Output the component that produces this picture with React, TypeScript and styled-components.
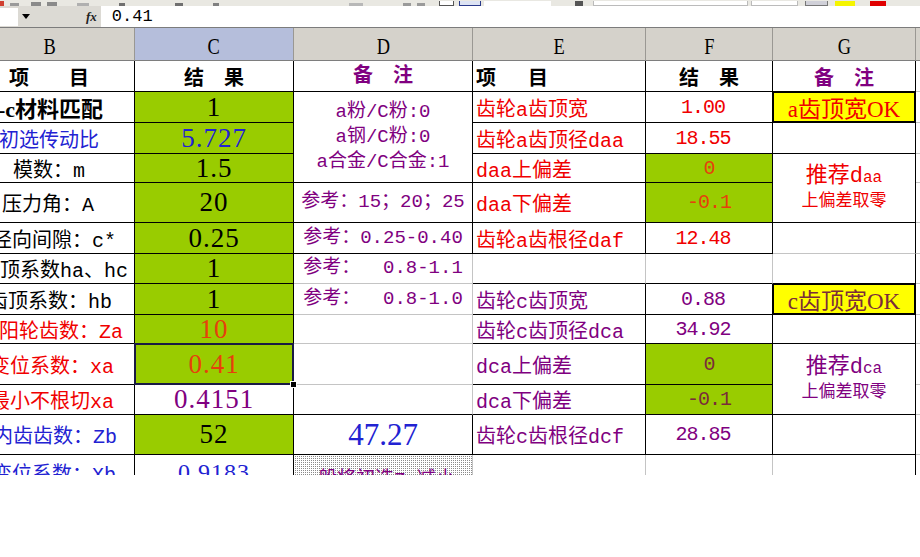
import React from "react";
import styled, { createGlobalStyle } from "styled-components";

const K = "#000";
const GRID = "#c4c4c4";
const GREEN = "#99cc00";
const YELLOW = "#ffff00";
const PURPLE = "#800080";
const RED = "#f00000";
const BLUE = "#2222d2";
const ORANGE = "#e6400c";
const BROWN = "#7a2c3a";
const MONO = `"Liberation Mono", "Noto Sans CJK SC", monospace`;
const SERIF = `"Liberation Serif", "Noto Sans CJK SC", serif`;

const Global = createGlobalStyle`
  html, body { margin: 0; padding: 0; background: #fff; }
  body { width: 920px; height: 557px; overflow: hidden; font-family: ${MONO}; }
`;

const Toolbar = styled.div`
  height: 6px;
  background: #e9e8e2;
  display: flex;
  align-items: flex-end;
  overflow: hidden;
`;

const ToolBit = styled.span<{ $w: number; $c: string; $ml: number; $h?: number; $edge?: string }>`
  flex: none;
  box-sizing: border-box;
  width: ${p => p.$w}px;
  height: ${p => p.$h ?? 5}px;
  margin-left: ${p => p.$ml}px;
  background: ${p => p.$c};
  border: ${p => (p.$edge ? `1px solid ${p.$edge}` : "none")};
  border-top: none;
`;

const FormulaBar = styled.div`
  height: 21px;
  display: flex;
  align-items: center;
  background: #dcdad4;
  border-bottom: 1px solid #7c7c7c;
`;

const NameBox = styled.div`
  width: 18px;
  height: 18px;
  background: #fff;
`;

const DropArrow = styled.span`
  width: 0;
  height: 0;
  margin-left: 4px;
  border-left: 4px solid transparent;
  border-right: 4px solid transparent;
  border-top: 5px solid #000;
`;

const Fx = styled.span`
  margin-left: 56px;
  font: italic bold 13px "Liberation Serif", serif;
  color: #222;
`;

const FormulaInput = styled.div`
  flex: 1;
  align-self: stretch;
  margin-left: 4px;
  padding-left: 11px;
  background: #fff;
  display: flex;
  align-items: center;
  font: 17px ${MONO};
  color: #000;
`;

const Viewport = styled.div`
  width: 920px;
  height: 447px;
  overflow: hidden;
`;

const Sheet = styled.div`
  display: grid;
  margin-left: -34px;
  grid-template-columns: 169px 159px 179px 173px 127px 143px 60px;
  grid-template-rows: 33px 31px 31px 31px 29px 40px 31px 30px 31px 29px 41px 30px 40px 36px;
`;

const HeadCell = styled.div<{ $active?: boolean }>`
  box-sizing: border-box;
  display: flex;
  align-items: center;
  justify-content: center;
  padding-top: 5px;
  background: ${p => (p.$active ? "#b5bedb" : "#d5d2cb")};
  border-right: 1px solid #9a9893;
  border-bottom: 1px solid #7e7e7e;
  font: 23px "Liberation Serif", serif;
  color: #000;
`;

const HeadLetter = styled.span`
  display: inline-block;
  transform: scaleX(0.8);
`;

const Cell = styled.div<{ $r?: string; $b?: string; $bg?: string; $span?: number }>`
  box-sizing: border-box;
  min-width: 0;
  display: flex;
  align-items: center;
  position: relative;
  overflow: hidden;
  white-space: pre;
  background: ${p => p.$bg ?? "#fff"};
  border-right: 1px solid ${p => p.$r ?? K};
  border-bottom: 1px solid ${p => p.$b ?? K};
  ${p => (p.$span ? `grid-row: span ${p.$span};` : "")}
`;

const LabelCell = styled(Cell)<{ $indent: number; $tone?: string; $bold?: boolean; $size?: number; $serif?: boolean }>`
  padding-left: ${p => p.$indent + 34}px;
  font-family: ${p => (p.$serif ? SERIF : MONO)};
  font-size: ${p => p.$size ?? 20}px;
  font-weight: ${p => (p.$bold ? 700 : 400)};
  color: ${p => p.$tone ?? K};
`;

const ValueCell = styled(Cell)<{ $tone?: string; $size?: number; $selected?: boolean }>`
  justify-content: center;
  font-family: ${SERIF};
  font-size: ${p => p.$size ?? 27}px;
  letter-spacing: 1px;
  color: ${p => p.$tone ?? K};
  ${p => (p.$selected ? "overflow: visible; z-index: 2;" : "")}
`;

const NoteCell = styled(Cell)<{ $tone?: string; $size?: number }>`
  flex-direction: column;
  justify-content: center;
  font-family: ${p => (p.$size && p.$size > 24 ? SERIF : MONO)};
  font-size: ${p => p.$size ?? 19}px;
  line-height: 25px;
  color: ${p => p.$tone ?? PURPLE};
`;

const DottedNote = styled(Cell)`
  align-items: flex-start;
  padding: 8px 0 0 5px;
  background-color: #fff;
  background-image: linear-gradient(90deg, #fff 1px, transparent 1px),
    linear-gradient(#fff 1px, #8a8a8a 1px);
  background-size: 2px 2px;
  font-family: ${MONO};
  font-size: 19px;
  color: ${PURPLE};
`;

const ItemCell = styled(Cell)<{ $tone?: string }>`
  padding-left: 3px;
  font-family: ${MONO};
  font-size: 20px;
  color: ${p => p.$tone ?? K};
`;

const ResultCell = styled(Cell)<{ $tone?: string; $shift?: number }>`
  justify-content: center;
  padding-right: ${p => p.$shift ?? 0}px;
  font-family: ${MONO};
  font-size: 20px;
  letter-spacing: -1px;
  color: ${p => p.$tone ?? K};
`;

const RemarkCell = styled(Cell)<{ $tone?: string }>`
  flex-direction: column;
  justify-content: center;
  font-family: ${MONO};
  color: ${p => p.$tone ?? K};
`;

const CheckCell = styled(Cell)<{ $tone: string }>`
  justify-content: center;
  background: ${YELLOW};
  box-shadow: inset 1px 1px 0 #000, inset -1px -1px 0 #000;
  font-family: ${SERIF};
  font-size: 23px;
  color: ${p => p.$tone};
`;

const Caption = styled.span<{ $tone?: string }>`
  font-family: ${MONO};
  font-size: 20px;
  font-weight: 700;
  letter-spacing: 0;
  color: ${p => p.$tone ?? K};
`;

const Advice = styled.span`
  font-size: 22px;
  line-height: 25px;
`;

const AdviceSub = styled.span`
  font-size: 16px;
`;

const AdviceNote = styled.span`
  font-size: 17px;
  line-height: 22px;
`;

const Selection = styled.span`
  position: absolute;
  left: -1px;
  top: -1px;
  right: -1px;
  bottom: -1px;
  border: 2px solid #1a1a44;
  pointer-events: none;
`;

const FillHandle = styled.span`
  position: absolute;
  right: -4px;
  bottom: -4px;
  width: 5px;
  height: 5px;
  background: #000;
  border: 1px solid #fff;
`;

export default function App() {
  return (
    <>
      <Global />
      <Toolbar>
        <ToolBit $w={4} $c="#d04030" $ml={0} />
        <ToolBit $w={9} $c="#9a9a9a" $ml={6} $h={3} />
        <ToolBit $w={10} $c="#8a8a8a" $ml={12} $h={4} />
        <ToolBit $w={10} $c="#8a8a8a" $ml={6} $h={4} />
        <ToolBit $w={12} $c="#b0b0b0" $ml={20} $h={3} />
        <ToolBit $w={6} $c="#707070" $ml={30} $h={3} />
        <ToolBit $w={8} $c="#707070" $ml={50} $h={3} />
        <ToolBit $w={6} $c="#808080" $ml={30} $h={3} />
        <ToolBit $w={14} $c="#b8b8b8" $ml={130} $h={3} />
        <ToolBit $w={8} $c="#9a9a9a" $ml={40} $h={3} />
        <ToolBit $w={8} $c="#9a9a9a" $ml={6} $h={3} />
        <ToolBit $w={15} $c="#fff" $ml={14} $edge="#555" />
        <ToolBit $w={22} $c="#dde3f3" $ml={5} $edge="#2a3a8a" />
        <ToolBit $w={67} $c="#fff" $ml={3} />
        <ToolBit $w={8} $c="#555" $ml={24} $h={5} />
        <ToolBit $w={155} $c="#fff" $ml={10} $edge="#bbb" />
        <ToolBit $w={47} $c="#fff" $ml={3} $edge="#bbb" />
        <ToolBit $w={23} $c="#d0d0d8" $ml={7} $edge="#777" />
        <ToolBit $w={20} $c="#f5f500" $ml={7} />
        <ToolBit $w={16} $c="#e00000" $ml={15} />
      </Toolbar>
      <FormulaBar>
        <NameBox />
        <DropArrow />
        <Fx>fx</Fx>
        <FormulaInput>0.41</FormulaInput>
      </FormulaBar>
      <Viewport>
        <Sheet>
          <HeadCell><HeadLetter>B</HeadLetter></HeadCell>
          <HeadCell $active><HeadLetter>C</HeadLetter></HeadCell>
          <HeadCell><HeadLetter>D</HeadLetter></HeadCell>
          <HeadCell><HeadLetter>E</HeadLetter></HeadCell>
          <HeadCell><HeadLetter>F</HeadLetter></HeadCell>
          <HeadCell><HeadLetter>G</HeadLetter></HeadCell>
          <HeadCell />

          {/* row 1 */}
          <LabelCell $indent={9} $bold>项　　目</LabelCell>
          <ValueCell><Caption>结　果</Caption></ValueCell>
          <NoteCell><Caption $tone={PURPLE}>备　注</Caption></NoteCell>
          <ItemCell><Caption>项　 目</Caption></ItemCell>
          <ResultCell><Caption>结　果</Caption></ResultCell>
          <RemarkCell><Caption $tone={PURPLE}>备　注</Caption></RemarkCell>
          <Cell $r={GRID} $b={GRID} />

          {/* row 2 */}
          <LabelCell $indent={-13} $bold $size={22} $serif>a-c材料匹配</LabelCell>
          <ValueCell $bg={GREEN}>1</ValueCell>
          <NoteCell $span={3}>
            <span>a粉/C粉:0</span>
            <span>a钢/C粉:0</span>
            <span>a合金/C合金:1</span>
          </NoteCell>
          <ItemCell $tone={RED}>齿轮a齿顶宽</ItemCell>
          <ResultCell $tone={RED} $shift={12}>1.00</ResultCell>
          <CheckCell $tone={RED}>a齿顶宽OK</CheckCell>
          <Cell $r={GRID} $b={GRID} />

          {/* row 3 */}
          <LabelCell $indent={-1} $tone={BLUE}>初选传动比</LabelCell>
          <ValueCell $bg={GREEN} $tone={BLUE}>5.727</ValueCell>
          <ItemCell $tone={RED}>齿轮a齿顶径daa</ItemCell>
          <ResultCell $tone={RED} $shift={12}>18.55</ResultCell>
          <RemarkCell />
          <Cell $r={GRID} $b={GRID} />

          {/* row 4 */}
          <LabelCell $indent={13}>模数：m</LabelCell>
          <ValueCell $bg={GREEN}>1.5</ValueCell>
          <ItemCell $tone={RED}>daa上偏差</ItemCell>
          <ResultCell $bg={GREEN} $tone={ORANGE}>0</ResultCell>
          <RemarkCell $span={2} $tone={RED}>
            <Advice>推荐d<AdviceSub>aa</AdviceSub></Advice>
            <AdviceNote>上偏差取零</AdviceNote>
          </RemarkCell>
          <Cell $r={GRID} $b={GRID} />

          {/* row 5 */}
          <LabelCell $indent={2}>压力角：A</LabelCell>
          <ValueCell $bg={GREEN}>20</ValueCell>
          <NoteCell>参考：15；20；25</NoteCell>
          <ItemCell $tone={RED}>daa下偏差</ItemCell>
          <ResultCell $bg={GREEN} $tone={ORANGE}>-0.1</ResultCell>
          <Cell $r={GRID} $b={GRID} />

          {/* row 6 */}
          <LabelCell $indent={-8}>径向间隙：c*</LabelCell>
          <ValueCell $bg={GREEN}>0.25</ValueCell>
          <NoteCell>参考：0.25-0.40</NoteCell>
          <ItemCell $tone={RED}>齿轮a齿根径daf</ItemCell>
          <ResultCell $tone={RED} $shift={12}>12.48</ResultCell>
          <RemarkCell $b={GRID} />
          <Cell $r={GRID} $b={GRID} />

          {/* row 7 */}
          <LabelCell $indent={-20}>齿顶系数ha、hc</LabelCell>
          <ValueCell $bg={GREEN}>1</ValueCell>
          <NoteCell $r={GRID} $b={GRID}>参考：  0.8-1.1</NoteCell>
          <ItemCell $r={GRID} />
          <ResultCell $r={GRID} />
          <RemarkCell />
          <Cell $r={GRID} $b={GRID} />

          {/* row 8 */}
          <LabelCell $indent={-32}>内齿顶系数：hb</LabelCell>
          <ValueCell $bg={GREEN}>1</ValueCell>
          <NoteCell $r={GRID} $b={GRID}>参考：  0.8-1.0</NoteCell>
          <ItemCell $tone={PURPLE}>齿轮c齿顶宽</ItemCell>
          <ResultCell $tone={PURPLE} $shift={12}>0.88</ResultCell>
          <CheckCell $tone={BROWN}>c齿顶宽OK</CheckCell>
          <Cell $r={GRID} $b={GRID} />

          {/* row 9 */}
          <LabelCell $indent={-21} $tone={RED}>太阳轮齿数：Za</LabelCell>
          <ValueCell $bg={GREEN} $tone={ORANGE}>10</ValueCell>
          <NoteCell $r={GRID} $b={GRID} />
          <ItemCell $tone={PURPLE}>齿轮c齿顶径dca</ItemCell>
          <ResultCell $tone={PURPLE} $shift={12}>34.92</ResultCell>
          <RemarkCell />
          <Cell $r={GRID} $b={GRID} />

          {/* row 10 */}
          <LabelCell $indent={-10} $tone={RED}>变位系数：xa</LabelCell>
          <ValueCell $bg={GREEN} $tone={ORANGE} $selected>
            0.41
            <Selection />
            <FillHandle />
          </ValueCell>
          <NoteCell $r={GRID} $b={GRID} />
          <ItemCell $tone={PURPLE}>dca上偏差</ItemCell>
          <ResultCell $bg={GREEN} $tone={BROWN}>0</ResultCell>
          <RemarkCell $span={2} $tone={PURPLE}>
            <Advice>推荐d<AdviceSub>ca</AdviceSub></Advice>
            <AdviceNote>上偏差取零</AdviceNote>
          </RemarkCell>
          <Cell $r={GRID} $b={GRID} />

          {/* row 11 */}
          <LabelCell $indent={-10} $tone={RED}>最小不根切xa</LabelCell>
          <ValueCell $tone={PURPLE}>0.4151</ValueCell>
          <NoteCell $r={GRID} />
          <ItemCell $tone={PURPLE}>dca下偏差</ItemCell>
          <ResultCell $bg={GREEN} $tone={BROWN}>-0.1</ResultCell>
          <Cell $r={GRID} $b={GRID} />

          {/* row 12 */}
          <LabelCell $indent={-7} $tone={BLUE}>内齿齿数：Zb</LabelCell>
          <ValueCell $bg={GREEN}>52</ValueCell>
          <NoteCell $tone={BLUE} $size={31}>47.27</NoteCell>
          <ItemCell $tone={PURPLE}>齿轮c齿根径dcf</ItemCell>
          <ResultCell $tone={PURPLE} $shift={12}>28.85</ResultCell>
          <RemarkCell />
          <Cell $r={GRID} $b={GRID} />

          {/* row 13 */}
          <LabelCell $indent={-8} $tone={BLUE} $b={GRID}>变位系数：Xb</LabelCell>
          <ValueCell $tone={BLUE} $size={24} $b={GRID}>0.9183</ValueCell>
          <DottedNote $r={GRID} $b={GRID}>一般将初选Za减小</DottedNote>
          <ItemCell $r={GRID} $b={GRID} />
          <ResultCell $r={GRID} $b={GRID} />
          <RemarkCell $b={GRID} />
          <Cell $r={GRID} $b={GRID} />
        </Sheet>
      </Viewport>
    </>
  );
}
